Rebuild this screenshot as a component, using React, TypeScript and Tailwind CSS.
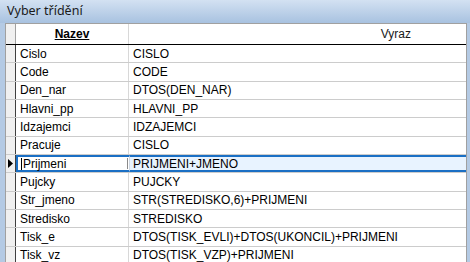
import React from 'react';

const rows = [
  ['Cislo', 'CISLO'],
  ['Code', 'CODE'],
  ['Den_nar', 'DTOS(DEN_NAR)'],
  ['Hlavni_pp', 'HLAVNI_PP'],
  ['Idzajemci', 'IDZAJEMCI'],
  ['Pracuje', 'CISLO'],
  ['Prijmeni', 'PRIJMENI+JMENO'],
  ['Pujcky', 'PUJCKY'],
  ['Str_jmeno', 'STR(STREDISKO,6)+PRIJMENI'],
  ['Stredisko', 'STREDISKO'],
  ['Tisk_e', 'DTOS(TISK_EVLI)+DTOS(UKONCIL)+PRIJMENI'],
  ['Tisk_vz', 'DTOS(TISK_VZP)+PRIJMENI'],
];

const SELECTED = 6;

export default function App() {
  return (
    <div className="w-[470px] h-[262px] overflow-hidden flex flex-col bg-[#b4cae4] font-['Liberation_Sans',Arial,sans-serif] text-[12px] text-black">
      {/* title bar */}
      <div className="h-[23px] shrink-0 flex items-center pl-[7px] bg-gradient-to-b from-[#d3e1f2] to-[#a8c2e0] font-['Noto_Sans',sans-serif] text-[12.5px] text-[#1a1a1a]">
        Vyber třídění
      </div>

      <div className="flex-1 flex pl-[5px] pr-[3px] min-h-0">
        <div className="flex-1 bg-white border-l border-t border-r border-[#a0a0a0] flex flex-col">
          {/* header */}
          <div className="h-[21px] shrink-0 flex border-b border-black">
            <div className="w-[10px] shrink-0 bg-[#f0f0f0] border-r border-[#a0a0a0]" />
            <div className="w-[113px] shrink-0 flex items-center justify-center border-r border-[#d8d8d8] font-bold underline">
              Nazev
            </div>
            <div className="flex-1 flex items-center justify-end pr-[55px] text-[#1a1a1a]">Vyraz</div>
          </div>

          {rows.map(([name, expr], i) => {
            const sel = i === SELECTED;
            return (
              <div key={name} className="h-[18.35px] shrink-0 flex border-b border-[#cccccc]">
                <div className="w-[10px] shrink-0 bg-[#f0f0f0] border-r border-[#404040] flex items-center justify-center">
                  {sel && (
                    <svg width="5" height="9" viewBox="0 0 5 9">
                      <path d="M0 0 L5 4.5 L0 9 Z" fill="#000" />
                    </svg>
                  )}
                </div>
                {sel ? (
                  <>
                    <div className="w-[113px] shrink-0 border-2 border-r-0 border-[#1a6fc4] p-[1px] flex">
                      <div className="flex-1 flex items-center pl-[2px] border-r border-[#8a8a8a]">
                        <span className="w-px h-[12px] bg-black mr-[1px]" />
                        {name}
                      </div>
                    </div>
                    <div className="flex-1 flex items-center pl-[3px] bg-[#e8f3ff] border-y-2 border-l border-[#1a6fc4] border-l-[#cfd8e4]">
                      {expr}
                    </div>
                  </>
                ) : (
                  <>
                    <div className="w-[113px] shrink-0 flex items-center pl-[4px] border-r border-[#d8d8d8]">
                      {name}
                    </div>
                    <div className="flex-1 flex items-center pl-[4px]">{expr}</div>
                  </>
                )}
              </div>
            );
          })}
        </div>
      </div>
    </div>
  );
}
